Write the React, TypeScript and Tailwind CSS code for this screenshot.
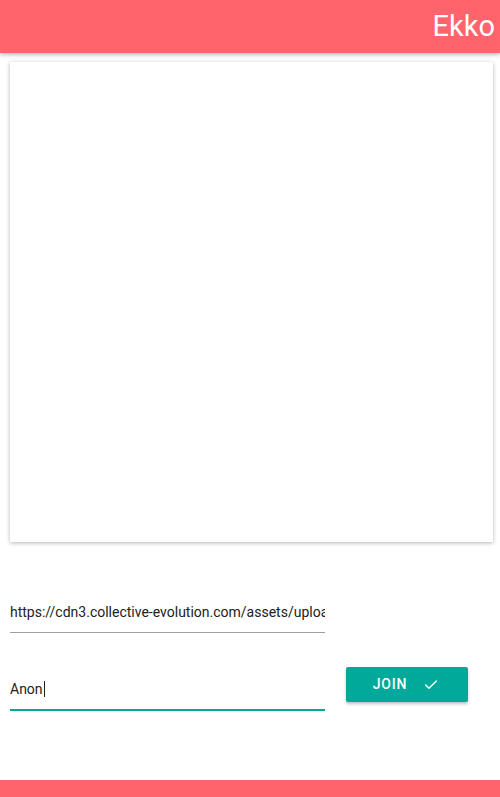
import { Check } from 'lucide-react';

export default function App() {
  return (
    <div className="relative h-[797px] w-[500px] overflow-hidden bg-white font-['Roboto',sans-serif]">
      <header className="relative z-10 flex h-[53px] items-center justify-end bg-[#ff636b] pr-[5px] shadow-[0_2px_4px_rgba(0,0,0,0.25)]">
        <h1 className="text-[29px] font-normal leading-none text-white">Ekko</h1>
      </header>

      <div className="ml-[10px] mt-[9px] h-[480px] w-[483px] bg-white shadow-[0_1px_4px_rgba(0,0,0,0.3)]" />

      <div className="ml-[10px] mt-[60px] flex flex-col">
        <div className="w-[315px] overflow-hidden border-b border-[#9e9e9e] pb-[10px]">
          <div className="whitespace-nowrap text-[14px] leading-[20px] text-[#212121]">
            https://cdn3.collective-evolution.com/assets/uploa
          </div>
        </div>

        <div className="mt-[34px] flex items-start">
          <div className="mt-[12px] w-[315px] border-b-2 border-[#00a99a] pb-[10px]">
            <div className="flex items-center text-[14px] leading-[20px] text-[#212121]">
              Anon<span className="ml-[1px] inline-block h-[16px] w-px bg-[#212121]" />
            </div>
          </div>
          <button className="ml-[21px] flex h-[35px] w-[122px] items-center justify-center gap-[16px] rounded-[2px] bg-[#00a99a] pr-[2px] text-[14px] font-medium tracking-[0.8px] text-white shadow-[0_2px_3px_rgba(0,0,0,0.25)]">
            JOIN
            <Check size={16} strokeWidth={2} />
          </button>
        </div>
      </div>

      <div className="absolute bottom-0 left-0 h-[17px] w-full bg-[#ff636b]" />
    </div>
  );
}
